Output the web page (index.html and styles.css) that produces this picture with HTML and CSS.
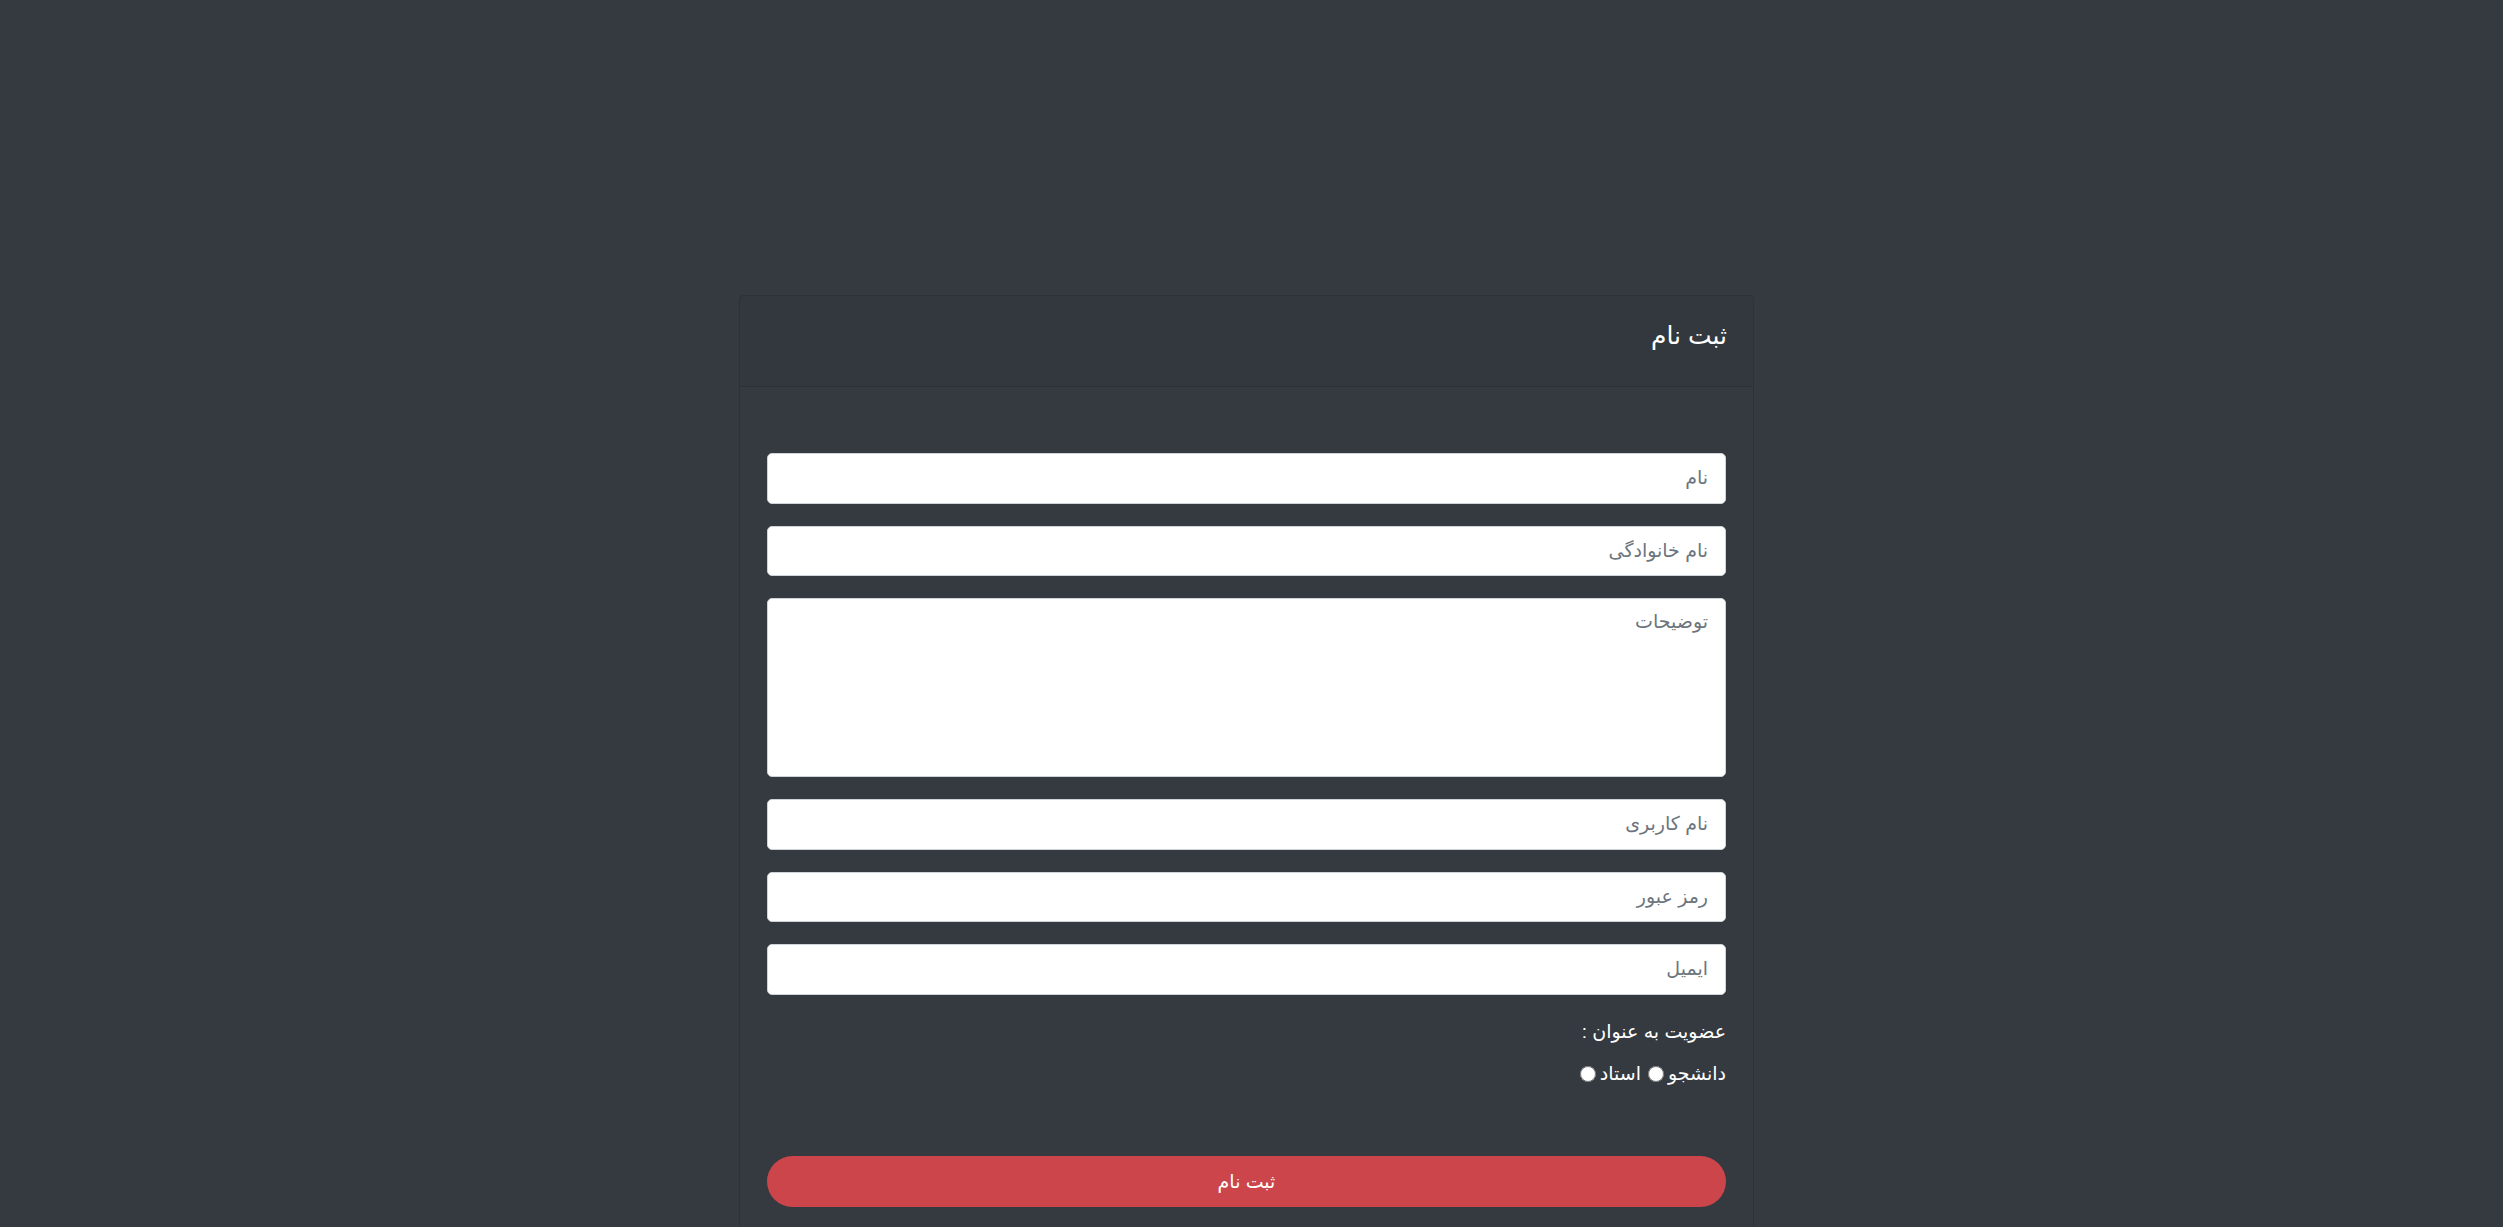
FILE: index.html
```html
<!DOCTYPE html>
<html lang="fa" dir="rtl">
<head>
<meta charset="utf-8">
<title>ثبت نام</title>
<link rel="stylesheet" href="styles.css">
</head>
<body>
<div class="page">
  <div class="card">
    <div class="card-header">
      <h5 class="card-title">ثبت نام</h5>
    </div>
    <div class="card-body">
      <form class="form">
        <input class="field" type="text" placeholder="نام">
        <input class="field" type="text" placeholder="نام خانوادگی">
        <textarea class="field area" placeholder="توضیحات"></textarea>
        <input class="field" type="text" placeholder="نام کاربری">
        <input class="field" type="password" placeholder="رمز عبور">
        <input class="field" type="email" placeholder="ایمیل">
        <div class="role">
          <div class="role-label">عضویت به عنوان :</div>
          <div class="role-options">
            <label class="opt"><span>دانشجو</span><input class="radio" type="radio" name="role"></label>
            <label class="opt"><span>استاد</span><input class="radio" type="radio" name="role"></label>
          </div>
        </div>
        <button class="submit" type="button">ثبت نام</button>
      </form>
    </div>
  </div>
</div>
</body>
</html>
```

FILE: styles.css
```css
html, body {
  margin: 0;
  padding: 0;
}
body {
  background: #343a40;
  font-family: "Liberation Sans", "DejaVu Sans", sans-serif;
  color: #ffffff;
  min-height: 1227px;
  overflow: hidden;
}
.page {
  display: flex;
  justify-content: center;
  padding-top: 295px;
  padding-right: 10px;
}
.card {
  width: 1015px;
  box-sizing: border-box;
  border: 1px solid rgba(0, 0, 0, 0.13);
  border-radius: 5px;
  background: #343a40;
}
.card-header {
  height: 91px;
  box-sizing: border-box;
  display: flex;
  align-items: center;
  padding: 0 26px 12px;
  background: rgba(0, 0, 0, 0.03);
  border-bottom: 1px solid rgba(0, 0, 0, 0.13);
}
.card-title {
  margin: 0;
  font-size: 25px;
  font-weight: normal;
  line-height: 1.2;
  color: #ffffff;
}
.card-body {
  padding: 66px 27px 60px;
}
.form {
  display: flex;
  flex-direction: column;
  gap: 22px;
}
.field {
  display: block;
  width: 100%;
  height: 50.5px;
  box-sizing: border-box;
  border: 1px solid #ced4da;
  border-radius: 5px;
  background: #ffffff;
  padding: 0 17px;
  font-family: "Liberation Sans", "DejaVu Sans", sans-serif;
  font-size: 19px;
  color: #495057;
  direction: rtl;
  outline: none;
}
.field::placeholder {
  color: #6c757d;
}
.area {
  height: 179px;
  padding-top: 8px;
  line-height: 30px;
  resize: none;
}
.role {
  margin-top: 0;
  display: flex;
  flex-direction: column;
  gap: 12px;
  font-size: 19px;
  line-height: 30px;
}
.role-options {
  display: flex;
  align-items: center;
  gap: 7px;
}
.opt {
  display: flex;
  align-items: center;
  gap: 4px;
}
.radio {
  margin: 0;
  width: 16px;
  height: 16px;
}
.submit {
  margin-top: 45px;
  height: 51px;
  width: 100%;
  border: none;
  border-radius: 26px;
  background: #cc454b;
  color: #ffffff;
  font-family: "Liberation Sans", "DejaVu Sans", sans-serif;
  font-size: 19px;
}
```
